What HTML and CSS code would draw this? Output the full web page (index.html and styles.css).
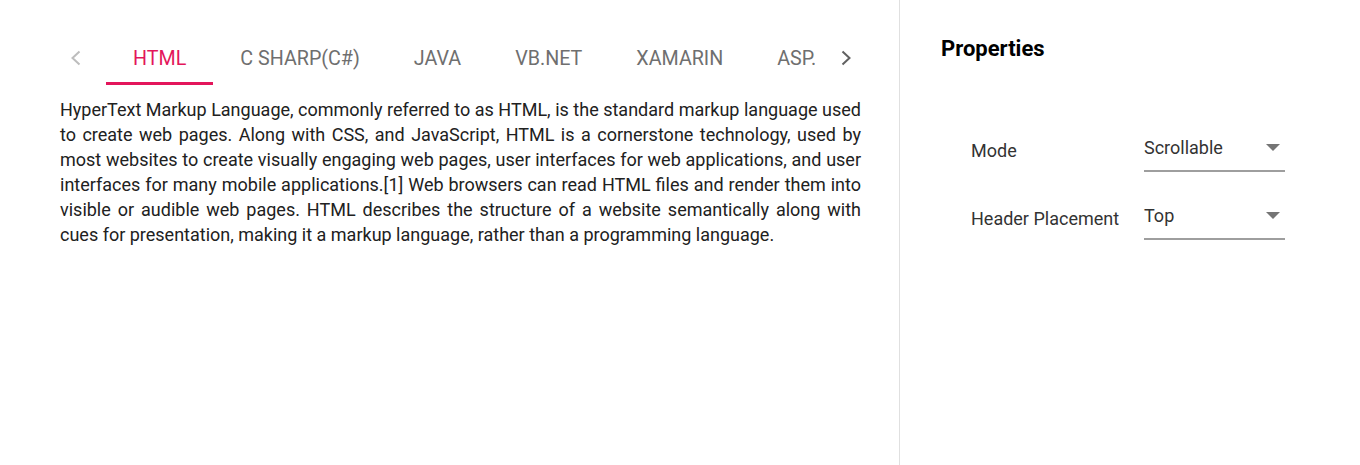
FILE: index.html
```html
<!DOCTYPE html>
<html>
<head>
<meta charset="utf-8">
<link rel="stylesheet" href="styles.css">
</head>
<body>
<div class="page">
  <section class="sample">
    <div class="tab-header">
      <button class="nav nav-prev" aria-label="Previous">
        <svg width="10" height="16" viewBox="0 0 10 16"><path d="M8.5 1.5 L1.5 8 L8.5 14.5" fill="none" stroke="currentColor" stroke-width="2"/></svg>
      </button>
      <div class="tab-viewport">
        <div class="tab-items">
          <div class="tab active">HTML</div>
          <div class="tab">C SHARP(C#)</div>
          <div class="tab">JAVA</div>
          <div class="tab">VB.NET</div>
          <div class="tab">XAMARIN</div>
          <div class="tab">ASP.NET</div>
        </div>
      </div>
      <button class="nav nav-next" aria-label="Next">
        <svg width="10" height="16" viewBox="0 0 10 16"><path d="M1.5 1.5 L8.5 8 L1.5 14.5" fill="none" stroke="currentColor" stroke-width="2"/></svg>
      </button>
    </div>
    <div class="tab-content">
      HyperText Markup Language, commonly referred to as HTML, is the standard markup language used to create web pages. Along with CSS, and JavaScript, HTML is a cornerstone technology, used by most websites to create visually engaging web pages, user interfaces for web applications, and user interfaces for many mobile applications.[1] Web browsers can read HTML files and render them into visible or audible web pages. HTML describes the structure of a website semantically along with cues for presentation, making it a markup language, rather than a programming language.
    </div>
  </section>
  <aside class="props">
    <h2 class="props-title">Properties</h2>
    <div class="props-rows">
      <div class="prop-row">
        <div class="prop-label">Mode</div>
        <div class="dropdown">
          <span class="dd-value">Scrollable</span>
          <span class="dd-arrow"></span>
        </div>
      </div>
      <div class="prop-row">
        <div class="prop-label">Header Placement</div>
        <div class="dropdown">
          <span class="dd-value">Top</span>
          <span class="dd-arrow"></span>
        </div>
      </div>
    </div>
  </aside>
</div>
</body>
</html>
```

FILE: styles.css
```css
* { box-sizing: border-box; }
html, body { margin: 0; padding: 0; background: #fff; }
body { font-family: Roboto, "Liberation Sans", sans-serif; color: #212121; }

.page {
  display: flex;
  height: 465px;
}

.sample {
  width: 900px;
  border-right: 1px solid #e0e0e0;
  padding: 33px 38px 0 60px;
}

.tab-header {
  display: flex;
  align-items: stretch;
  height: 52px;
}

.nav {
  border: 0;
  background: none;
  padding: 0;
  display: flex;
  align-items: center;
  cursor: pointer;
}
.nav-prev { width: 32px; justify-content: center; color: #bdbdbd; padding-bottom: 2px; }
.nav-next { width: 46px; justify-content: flex-end; padding-right: 10px; color: #616161; padding-bottom: 2px; }

.tab-viewport {
  flex: 1;
  overflow: hidden;
  padding-left: 14px;
}
.tab-items {
  display: flex;
  height: 100%;
}
.tab {
  flex: none;
  padding: 2px 27px 0;
  display: flex;
  align-items: center;
  font-size: 19.7px;
  color: #6f6f6f;
  white-space: nowrap;
  border-bottom: 3px solid transparent;
}
.tab.active {
  color: #e3165b;
  border-bottom-color: #e3165b;
}

.tab-content {
  margin-top: 12px;
  font-size: 18px;
  line-height: 25px;
  text-align: justify;
  color: #212121;
}

.props {
  flex: 1;
  padding: 34px 0 0 41px;
}
.props-title {
  margin: 0;
  font-size: 22px;
  font-weight: 700;
  line-height: 30px;
  color: #000;
}
.props-rows {
  margin-top: 68px;
  padding-left: 30px;
  display: flex;
  flex-direction: column;
  gap: 28px;
}
.prop-row {
  display: flex;
  align-items: flex-end;
  height: 40px;
}
.prop-label {
  width: 173px;
  font-size: 18px;
  color: #333;
  padding-bottom: 11px;
}
.dropdown {
  width: 141px;
  height: 40px;
  border-bottom: 2px solid #9e9e9e;
  display: flex;
  align-items: center;
  justify-content: space-between;
  padding-bottom: 7px;
}
.dd-value {
  font-size: 18px;
  color: #333;
}
.dd-arrow {
  width: 0;
  height: 0;
  border-left: 7px solid transparent;
  border-right: 7px solid transparent;
  border-top: 7px solid #757575;
  margin-right: 5px;
}
```
